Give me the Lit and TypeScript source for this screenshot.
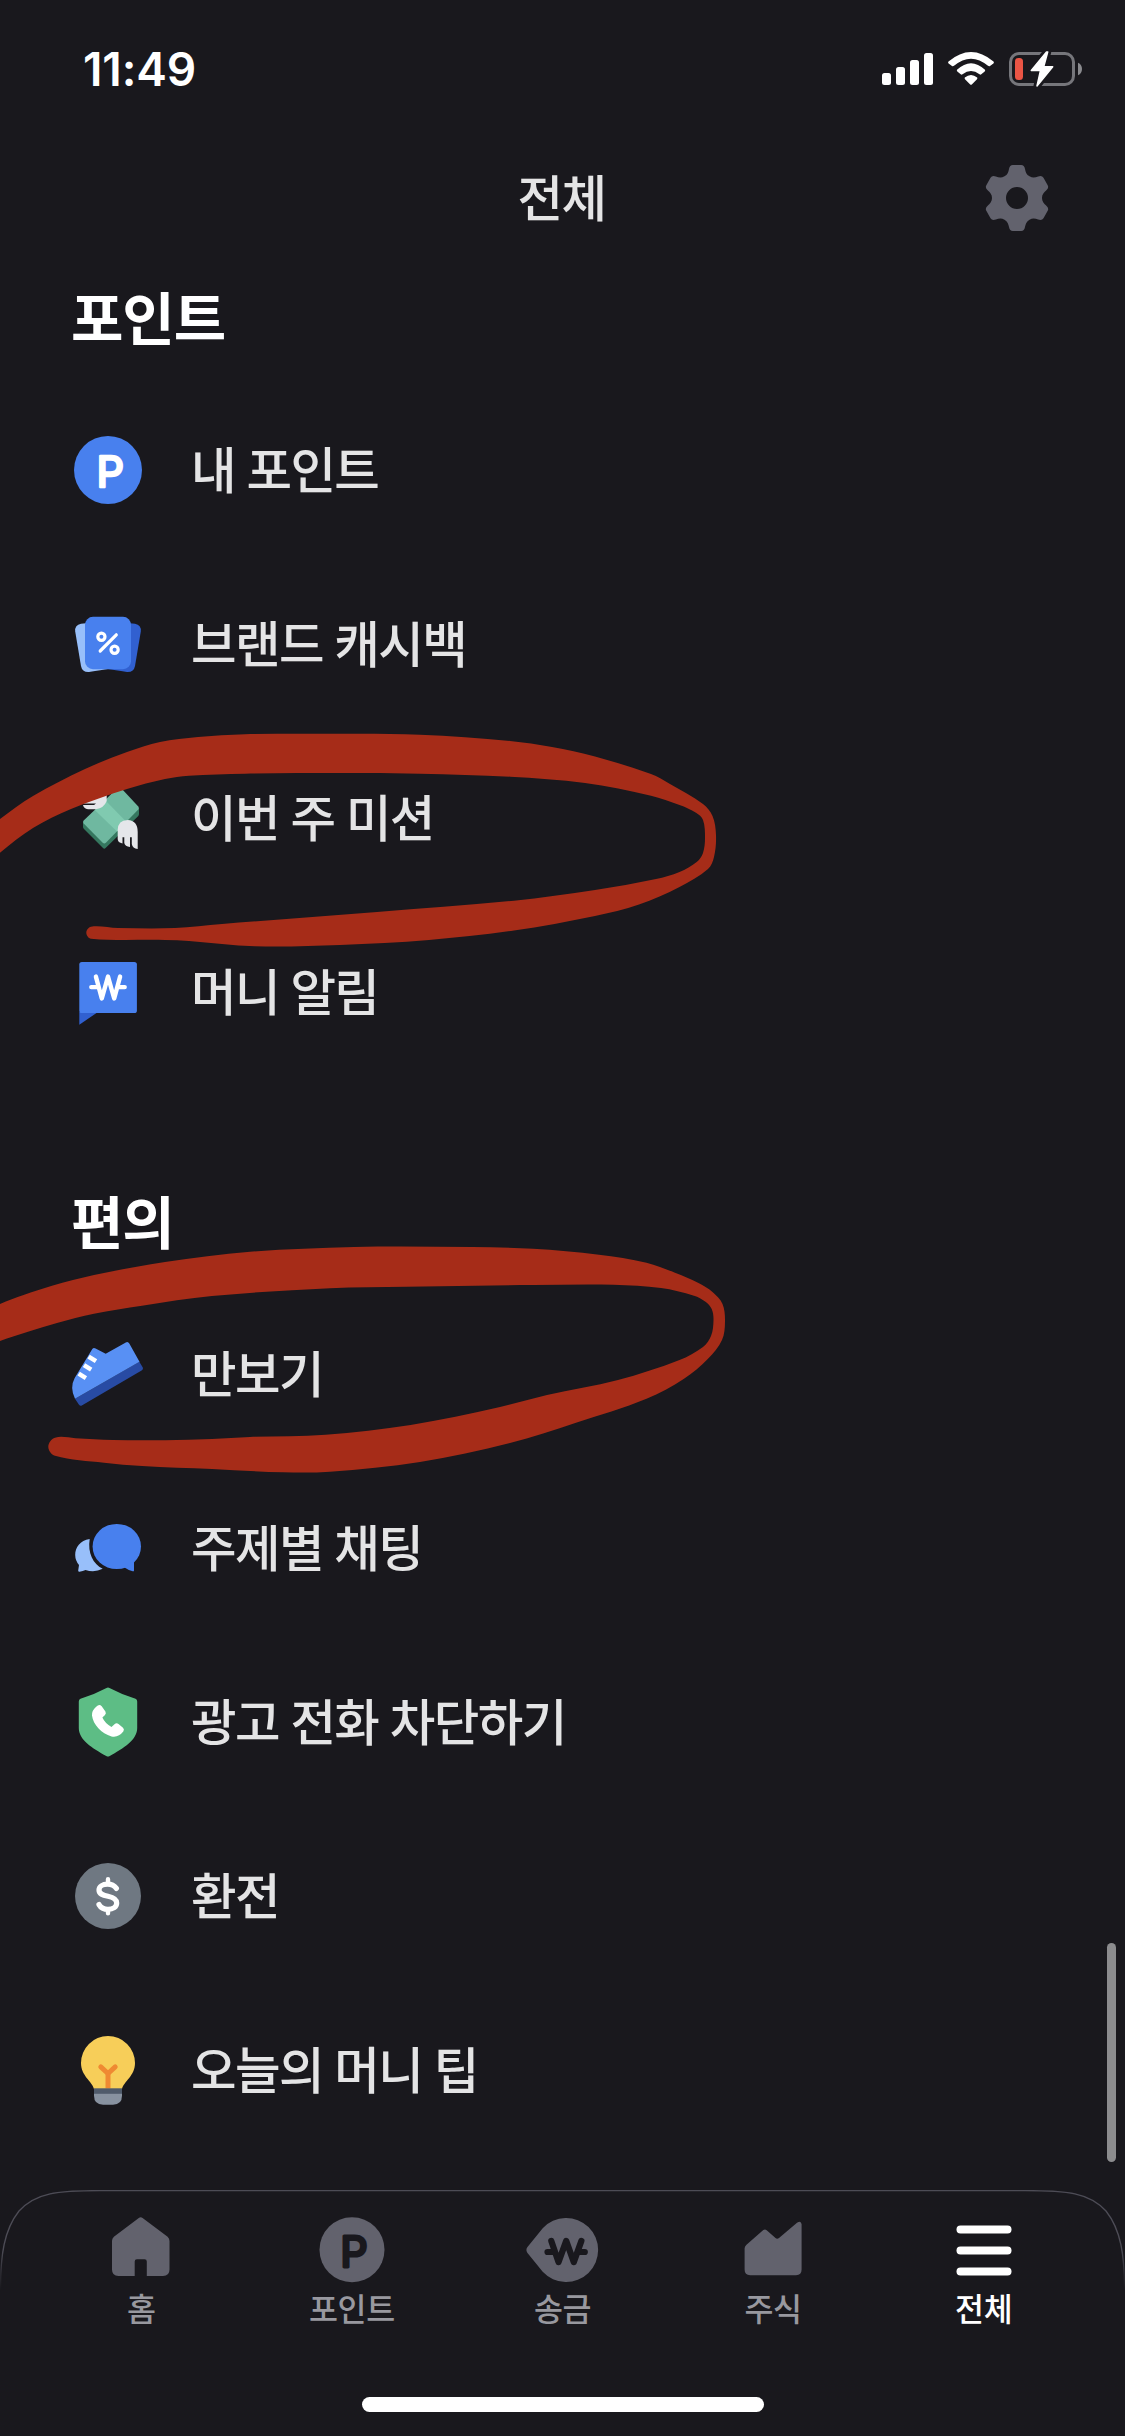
import { LitElement, html, css, svg } from "lit";
import { customElement, property } from "lit/decorators.js";

type Point = [number, number];

/** Closed smooth outline through the points (Catmull-Rom to Bezier). */
function smoothPath(points: Point[]): string {
  const n = points.length;
  const at = (i: number) => points[(i + n) % n];
  let d = `M${points[0][0]} ${points[0][1]}`;
  for (let i = 0; i < n; i++) {
    const [p0, p1, p2, p3] = [at(i - 1), at(i), at(i + 1), at(i + 2)];
    const seg = Math.hypot(p2[0] - p1[0], p2[1] - p1[1]);
    const handle = (a: Point, b: Point): Point => {
      const len = Math.hypot(b[0] - a[0], b[1] - a[1]) || 1;
      return [((b[0] - a[0]) / len) * (seg / 3), ((b[1] - a[1]) / len) * (seg / 3)];
    };
    const h1 = handle(p0, p2);
    const h2 = handle(p1, p3);
    d += `C${(p1[0] + h1[0]).toFixed(1)} ${(p1[1] + h1[1]).toFixed(1)} ${(p2[0] - h2[0]).toFixed(1)} ${(p2[1] - h2[1]).toFixed(1)} ${p2[0]} ${p2[1]}`;
  }
  return d + "Z";
}

/** Six-toothed gear outline centred on the origin. */
function gearPath(): string {
  const f = (x: number, y: number, k: number) => {
    const a = (k * Math.PI) / 3;
    return `${(x * Math.cos(a) - y * Math.sin(a)).toFixed(2)} ${(x * Math.sin(a) + y * Math.cos(a)).toFixed(2)}`;
  };
  let d = `M${f(-12.5, -21.65, 0)}`;
  for (let k = 0; k < 6; k++) {
    d += `C${f(-9.4, -23.4, k)} ${f(-8.6, -26, k)} ${f(-8, -29, k)}`;
    d += `Q${f(-7.3, -33, k)} ${f(-4.2, -33, k)}L${f(4.2, -33, k)}`;
    d += `Q${f(7.3, -33, k)} ${f(8, -29, k)}`;
    d += `C${f(8.6, -26, k)} ${f(9.4, -23.4, k)} ${f(12.5, -21.65, k)}`;
  }
  return d + "ZM-11 0a11 11 0 1 0 22 0a11 11 0 1 0 -22 0Z";
}

const MISSION_LOOP: Point[] = [
  [-20, 834], [0, 819], [33, 796], [85, 769], [127, 752], [160, 742], [198, 737], [245, 734.3], [330, 733.8], [420, 734.7],
  [510, 741], [552, 747], [595, 756.5], [651, 774], [670, 784], [703, 804], [712.5, 816], [716, 835], [714, 857],
  [708, 869], [679.5, 887], [639, 904.5], [595, 916], [514, 930.5], [429, 940], [340, 945], [255, 946.3], [189, 941],
  [165, 940], [91, 938.7], [86.3, 932.7], [91, 926.7], [118, 928], [175, 928], [222, 924], [377, 912], [514, 900.7],
  [595, 890], [656, 879], [679.5, 872], [697, 861.7], [703, 853], [705, 838], [703, 820], [696, 812.7], [679.5, 805],
  [651, 795.7], [585, 783], [510, 776.7], [420, 773.7], [340, 773], [245, 773.7], [189, 775.7], [165, 779], [127, 789],
  [71, 809], [33, 828], [0, 852.7], [-20, 872],
];

const PEDOMETER_LOOP: Point[] = [
  [-20, 1315], [0, 1304], [23.6, 1295], [52, 1285.7], [94, 1275], [165, 1262], [250, 1251.7], [354, 1247], [401, 1246.4],
  [472, 1247], [533, 1248.7], [599, 1254.7], [646.5, 1262.7], [675, 1272.7], [698, 1282.7], [712.5, 1292],
  [722.5, 1304], [725, 1321.7], [722, 1340], [708, 1358.7], [684, 1378.7], [646.5, 1398.7], [576, 1422.7], [510, 1443],
  [420, 1462], [330, 1471.7], [283, 1472.3], [212, 1469], [142, 1466], [104, 1462.7], [55, 1455.7], [48.3, 1446.7],
  [55, 1437.7], [75.5, 1438.2], [113, 1440], [165, 1440.2], [212, 1439], [250, 1437], [325.6, 1434.7], [410.6, 1425],
  [500, 1407], [547, 1395], [618, 1380], [679.5, 1360], [703, 1347], [711, 1336], [713.5, 1320], [711.7, 1309],
  [705.5, 1301.7], [694, 1295.7], [661, 1288], [613.5, 1284.7], [533, 1285], [406, 1286.7], [330, 1288.2], [212, 1296],
  [142, 1305.7], [94, 1313.7], [57, 1323], [28, 1331.7], [0, 1341], [-20, 1350],
];

const ICONS = {
  point: svg`
    <circle cx="36" cy="36" r="34" fill="#4880ee"/>
    <text x="24.4" y="52.7" font-family="Inter, sans-serif" font-size="43" font-weight="400" fill="#fff"
      stroke="#fff" stroke-width="2.6" stroke-linejoin="round">P</text>`,
  cashback: svg`
    <path fill="#98bffa" d="M14 15.2 9 15.8Q2.6 17 3.2 23.5L9 58Q10.2 64.4 17 64Q30 62 36 61V20Z"/>
    <path fill="#3160d0" d="M58 15.2 63 15.8Q69.4 17 68.8 23.5L63 58Q61.8 64.4 55 64Q42 62 36 61V20Z"/>
    <rect x="13" y="8.8" width="46" height="52.4" rx="8" fill="#4880ee"/>
    <g fill="none" stroke="#fff" stroke-width="3.2" stroke-linecap="round">
      <circle cx="29.4" cy="28.7" r="3.6"/><circle cx="42.6" cy="41.7" r="3.6"/>
      <path d="M44.3 26.8 28.2 43"/>
    </g>`,
  mission: svg`
    <path fill="#35775f" d="M11 39.7V45Q11 46 12 47L31 66Q32.3 67.3 33.6 66L66.3 34Q67 33 67 32V26.3L47 20Z"/>
    <path fill="#6fb8a0" d="M45.6 6Q47.3 4.500 49 6L66.300 24.400Q67.500 26 66.300 27.600L33.900 60.800Q32.300 62.300 30.700 60.800L11.700 41.500Q10.500 40 11.700 38.500Z"/>
    <path fill="#80cab0" d="M23 28.200 34 19 54.500 40 45 49.600Z"/>
    <path fill="#e5e6ea" d="M45.700 48Q46 38 55.700 38Q65.700 38.500 65.700 50V67Q60.500 66.500 59.800 62V55.300H58V65Q53 64.500 52.300 61V55.300H50.500V61.500Q45.700 60.500 45.700 57Z"/>
    <path fill="#e5e6ea" d="M11 23H22L24 21.500H12V12H34.700V19Q32 26 24 27.300H16Q11.500 26.500 11 23Z"/>`,
  notice: svg`
    <path fill="#3160d0" d="M7.300 56H26L7.300 68.700Z"/>
    <rect x="7.300" y="6" width="57.600" height="51" rx="2.600" fill="#4880ee"/>
    <path fill="none" stroke="#fff" stroke-width="4.400" stroke-linecap="round" stroke-linejoin="round"
      d="M23.900 20.600 29.800 42.500 36 20.600 42.200 42.500 48.100 20.600M19.300 31.100H26.500M45.500 31.100H52.700"/>`,
  shoe: svg`
    <path fill="#284ba4" d="M3 60.700 67.300 23.700 70.800 29.500Q71.500 31 70 32.200L9.800 67.400Q8.300 68.300 7 66.700Z"/>
    <path fill="#5890f4" d="M20.300 11Q21.600 9.300 23.600 10.500L33.700 15.700 53.800 4.400Q56 3.200 57.300 5.500L67.500 23.700 3 60.700Q-2.500 49.500 2.700 40Z"/>
    <path stroke="#fff" stroke-width="4.500" d="M16.600 18.600 24 23.200M12 27.200 19.200 31.600M6.700 35.600 13.900 40.100"/>`,
  chat: svg`
    <ellipse cx="44.800" cy="34.500" rx="24.200" ry="22.600" fill="#4880ee"/>
    <path fill="#4880ee" d="M62 48V58.500Q62 59.600 60.700 59.300Q56 58 52.500 55.500Z"/>
    <path fill="#98bffa" d="M17.700 27C8 28.500 3.200 35.500 3.200 43Q3.200 48.500 7 53L6.200 58.600Q6 60 7.500 59.700Q11 59 13.500 58Q22.500 61 30.700 56.800C21 52 15.500 41 17.700 27Z"/>`,
  shield: svg`
    <path fill="#5dbd85" d="M34.500 1.900Q36 1 37.500 1.900Q50 8.500 63.500 12.800Q65.200 13.500 65.200 15.500V42C65.200 54 52 62 37.300 70.200Q36 71 34.700 70.200C20 62 6.800 54 6.800 42V15.500Q6.800 13.500 8.500 12.800Q22 8.500 34.500 1.900Z"/>
    <path fill="#fff" d="M24.200 20.800Q27.200 17.500 29.700 20.200L33.400 25.500Q34.600 27.500 32.800 29.200L30.400 31.600Q33 37.500 39.500 41L42.500 38.200Q44.500 36.500 46.500 37.900L51 41.800Q52.700 43.500 51.300 45.600Q46.500 51.800 39.500 50.400C29.500 47.500 21 38.500 20 29.500Q19.700 24.500 24.200 20.800Z"/>`,
  exchange: svg`
    <circle cx="36" cy="36" r="33" fill="#6f7882"/>
    <path fill="none" stroke="#fff" stroke-width="5.200" stroke-linecap="round"
      d="M44.400 28.400C42 25.200 39 24.200 35.600 24.200C30.500 24.200 27 26.500 27 30C27 34 30.500 35.100 36 36.300C42 37.600 44.700 39.500 44.700 43C44.700 47 41 49.300 36 49.300C32 49.300 28.700 47.600 27 44.600"/>
    <path stroke="#fff" stroke-width="4.400" stroke-linecap="round" d="M36 19.200V23M36 50V53.200"/>`,
  bulb: svg`
    <path fill="#f7ce59" d="M22 55C20 47 9 42 9 29A27 27 0 0 1 63 29C63 42 52 47 50 55Z"/>
    <path fill="none" stroke="#ef8a32" stroke-width="5" stroke-linecap="round" stroke-linejoin="round" d="M28.800 32.900 36 39.500 43.200 32.900"/>
    <path stroke="#ef8a32" stroke-width="5" d="M36 39V54.400"/>
    <path fill="#8892a0" d="M22 59H50V61.500Q50 70.700 41 70.700H31Q22 70.700 22 61.500Z"/>
    <path fill="#505b6b" d="M22 54.300H50V59.800H22Z"/>`,
};

const TAB_ICONS = {
  home: svg`<path d="M33.800 4Q35.700 2.500 37.600 4L62.600 22.800Q64.500 24.500 64.500 27V55.500Q64.500 62 58 62H41.800V47.500Q41.800 45.300 39.600 45.300H31.900Q29.700 45.300 29.700 47.500V62H13.500Q7 62 7 55.500V27Q7 24.500 8.900 22.800Z"/>`,
  point: svg`<circle cx="36" cy="35.700" r="32.500"/>
    <text class="cut" x="24.300" y="52.500" font-family="Inter, sans-serif" font-size="43" font-weight="400"
      stroke="#19181d" stroke-width="3" stroke-linejoin="round">P</text>`,
  send: svg`<path d="M1.300 38.700Q-.5 36 1.300 33.300L16.700 14.200A32 32 0 1 1 16.700 57.800Z"/>
    <path fill="none" stroke="#19181d" stroke-width="6.200" stroke-linecap="round" stroke-linejoin="round"
      d="M25.300 26.900 32.500 48.100 40.200 26.900 47.800 48.100 55.400 26.900M21.500 38H27.500M53 38H58.800"/>`,
  stock: svg`<path d="M7.600 34.500Q7.600 32.500 9.200 31L26.300 16Q28 14.700 29.700 16.200L38.500 24Q40.200 25.300 42 23.900L60 8.800Q64 6 64.600 10.300V55.500Q64.600 61.200 59 61.200H13.200Q7.600 61.200 7.600 55.500Z"/>`,
  menu: svg`<rect x="8.500" y="11.500" width="55" height="8" rx="4"/><rect x="8.500" y="32.500" width="55" height="8" rx="4"/><rect x="8.500" y="53.500" width="55" height="8" rx="4"/>`,
};

interface Item { icon: keyof typeof ICONS; label: string }

const SECTIONS: { title: string; items: Item[] }[] = [
  {
    title: "포인트",
    items: [
      { icon: "point", label: "내 포인트" },
      { icon: "cashback", label: "브랜드 캐시백" },
      { icon: "mission", label: "이번 주 미션" },
      { icon: "notice", label: "머니 알림" },
    ],
  },
  {
    title: "편의",
    items: [
      { icon: "shoe", label: "만보기" },
      { icon: "chat", label: "주제별 채팅" },
      { icon: "shield", label: "광고 전화 차단하기" },
      { icon: "exchange", label: "환전" },
      { icon: "bulb", label: "오늘의 머니 팁" },
    ],
  },
];

const TABS: { icon: keyof typeof TAB_ICONS; label: string; active?: boolean }[] = [
  { icon: "home", label: "홈" },
  { icon: "point", label: "포인트" },
  { icon: "send", label: "송금" },
  { icon: "stock", label: "주식" },
  { icon: "menu", label: "전체", active: true },
];

@customElement("status-bar")
class StatusBar extends LitElement {
  static styles = css`
    :host { display: flex; justify-content: space-between; height: 138px; padding: 0 42px 0 83px; }
    .time { margin-top: 41px; font: 600 46px/56px Inter, sans-serif; letter-spacing: -0.1px; color: #fff; }
    .icons { margin-top: 49px; width: 202px; height: 40px; }
  `;
  render() {
    return html`
      <div class="time">11:49</div>
      <svg class="icons" viewBox="881 49 202 40">
        <g fill="#fff">
          <rect x="882" y="73" width="9" height="12" rx="2.500"/>
          <rect x="896" y="67" width="9" height="18" rx="2.500"/>
          <rect x="910" y="60" width="9" height="25" rx="2.500"/>
          <rect x="924" y="53" width="9" height="32" rx="2.500"/>
          <path d="M948.500 61.500Q947.700 62.600 948.600 63.500L952 66Q953 66.600 954 65.800Q971 51.500 988 65.800Q989 66.600 990 66L993.400 63.500Q994.300 62.600 993.500 61.500Q971 42.500 948.500 61.500Z"/>
          <path d="M957 69.800Q956.500 70.600 957.300 71.400L960.700 74.300Q961.500 75 962.500 74.300Q971 67.500 979.500 74.300Q980.500 75 981.300 74.300L984.700 71.400Q985.500 70.600 985 69.800Q971 56.500 957 69.800Z"/>
          <path d="M964.800 77.600Q964.300 78.500 965 79.200L970.200 84.500Q971 85.200 971.800 84.500L977 79.200Q977.700 78.500 977.200 77.600Q971 72.500 964.800 77.600Z"/>
        </g>
        <rect x="1010.500" y="53.500" width="63" height="31" rx="8.500" fill="none" stroke="#76767b" stroke-width="3"/>
        <path d="M1078 62.700Q1082 64.500 1082 69Q1082 73.500 1078 75.300Z" fill="#8a8a8e"/>
        <rect x="1015" y="58" width="8" height="22" rx="3.500" fill="#eb5545"/>
        <path d="M1046.500 52 1031.300 70.500H1040.500L1037 86 1052.700 66.800H1043.700L1047.700 52Z" fill="#fff" stroke="#19181d" stroke-width="7" stroke-linejoin="round"/>
        <path d="M1046.500 52 1031.300 70.500H1040.500L1037 86 1052.700 66.800H1043.700L1047.700 52Z" fill="#fff" stroke="#fff" stroke-width="1.500" stroke-linejoin="round"/>
      </svg>
    `;
  }
}

@customElement("menu-section")
class MenuSection extends LitElement {
  @property() heading = "";
  @property({ attribute: false }) items: Item[] = [];
  static styles = css`
    :host { display: block; }
    .heading { margin: 0; height: 125px; padding-left: 71px; font-size: 57px; font-weight: 700; line-height: 115px; letter-spacing: -1.100px; color: #fff; }
    .row { display: flex; align-items: center; gap: 47px; height: 174px; padding-left: 72px; }
    .icon { width: 72px; height: 72px; overflow: visible; }
    .label { margin-bottom: 4px; font-size: 49.500px; font-weight: 500; line-height: 72px; letter-spacing: -1.600px; word-spacing: 2px; color: #e4e4e5; }
  `;
  render() {
    return html`
      <h2 class="heading">${this.heading}</h2>
      ${this.items.map((item) => html`
        <div class="row">
          <svg class="icon" viewBox="0 0 72 72">${ICONS[item.icon]}</svg>
          <span class="label">${item.label}</span>
        </div>`)}
    `;
  }
}

@customElement("tab-bar")
class TabBar extends LitElement {
  static styles = css`
    :host { display: flex; flex-direction: column; position: relative; height: 246px; }
    .edge { position: absolute; inset: 0; width: 1125px; height: 110px; }
    .tabs { display: flex; padding: 22px 36px 0 36px; }
    .tab { flex: 1; display: flex; flex-direction: column; align-items: center; font-size: 31.500px; font-weight: 500; line-height: 46px; letter-spacing: -0.400px; color: #98989f; }
    .active { color: #fff; }
    .icon { width: 72px; height: 72px; fill: #62626d; overflow: visible; }
    .active .icon { fill: #fff; }
    .cut { fill: #19181d; }
    .indicator { width: 402px; height: 15px; margin: auto auto 24px; border-radius: 8px; background: #fff; }
  `;
  render() {
    return html`
      <svg class="edge" viewBox="0 0 1125 110">
        <defs>
          <linearGradient id="fade" gradientUnits="userSpaceOnUse" x1="0" y1="0" x2="0" y2="100">
            <stop offset="0" stop-color="#4d4c56"/><stop offset=".6" stop-color="#4d4c56"/>
            <stop offset="1" stop-color="#4d4c56" stop-opacity="0"/>
          </linearGradient>
        </defs>
        <path fill="none" stroke="url(#fade)" stroke-width="1.300"
          d="M.5 100C.5 65 4 40 19 21C36 2.500 58 .6 100 .6H1025C1067 .6 1089 2.500 1106 21C1121 40 1124.500 65 1124.500 100"/>
      </svg>
      <div class="tabs">
        ${TABS.map((tab) => html`
          <div class="tab ${tab.active ? "active" : ""}">
            <svg class="icon" viewBox="0 -2 72 72">${TAB_ICONS[tab.icon]}</svg>
            <span>${tab.label}</span>
          </div>`)}
      </div>
      <div class="indicator"></div>
    `;
  }
}

@customElement("app-root")
class AppRoot extends LitElement {
  static styles = css`
    :host { display: block; width: 1125px; height: 2436px; }
    .screen { position: relative; display: flex; flex-direction: column; width: 1125px; height: 2436px; overflow: hidden; background: #19181d; font-family: "Noto Sans CJK KR", sans-serif; }
    .header { display: grid; grid-template-columns: 1fr auto 1fr; align-items: center; height: 120px; padding: 0 72px; }
    .title { grid-column: 2; margin: 0 2px 5px 0; font-size: 49.500px; font-weight: 500; line-height: 72px; letter-spacing: -1.600px; color: #e4e4e5; }
    .gear { justify-self: end; width: 72px; height: 72px; fill: #62626d; }
    .list { display: flex; flex-direction: column; gap: 83px; flex: 1; }
    .scribble { position: absolute; inset: 0; width: 1125px; height: 2436px; fill: #a62c18; pointer-events: none; }
    .scrollbar { position: absolute; top: 1943px; right: 9px; width: 9px; height: 219px; border-radius: 5px; background: #8c8c8e; }
  `;
  render() {
    return html`
      <div class="screen">
        <status-bar></status-bar>
        <div class="header">
          <div class="title">전체</div>
          <svg class="gear" viewBox="-36 -36 72 72"><path fill-rule="evenodd" d=${gearPath()}/></svg>
        </div>
        <div class="list">
          ${SECTIONS.map((s) => html`<menu-section .heading=${s.title} .items=${s.items}></menu-section>`)}
        </div>
        <tab-bar></tab-bar>
        <svg class="scribble" viewBox="0 0 1125 2436">
          <path d=${smoothPath(MISSION_LOOP)}/>
          <path d=${smoothPath(PEDOMETER_LOOP)}/>
        </svg>
        <div class="scrollbar"></div>
      </div>
    `;
  }
}
